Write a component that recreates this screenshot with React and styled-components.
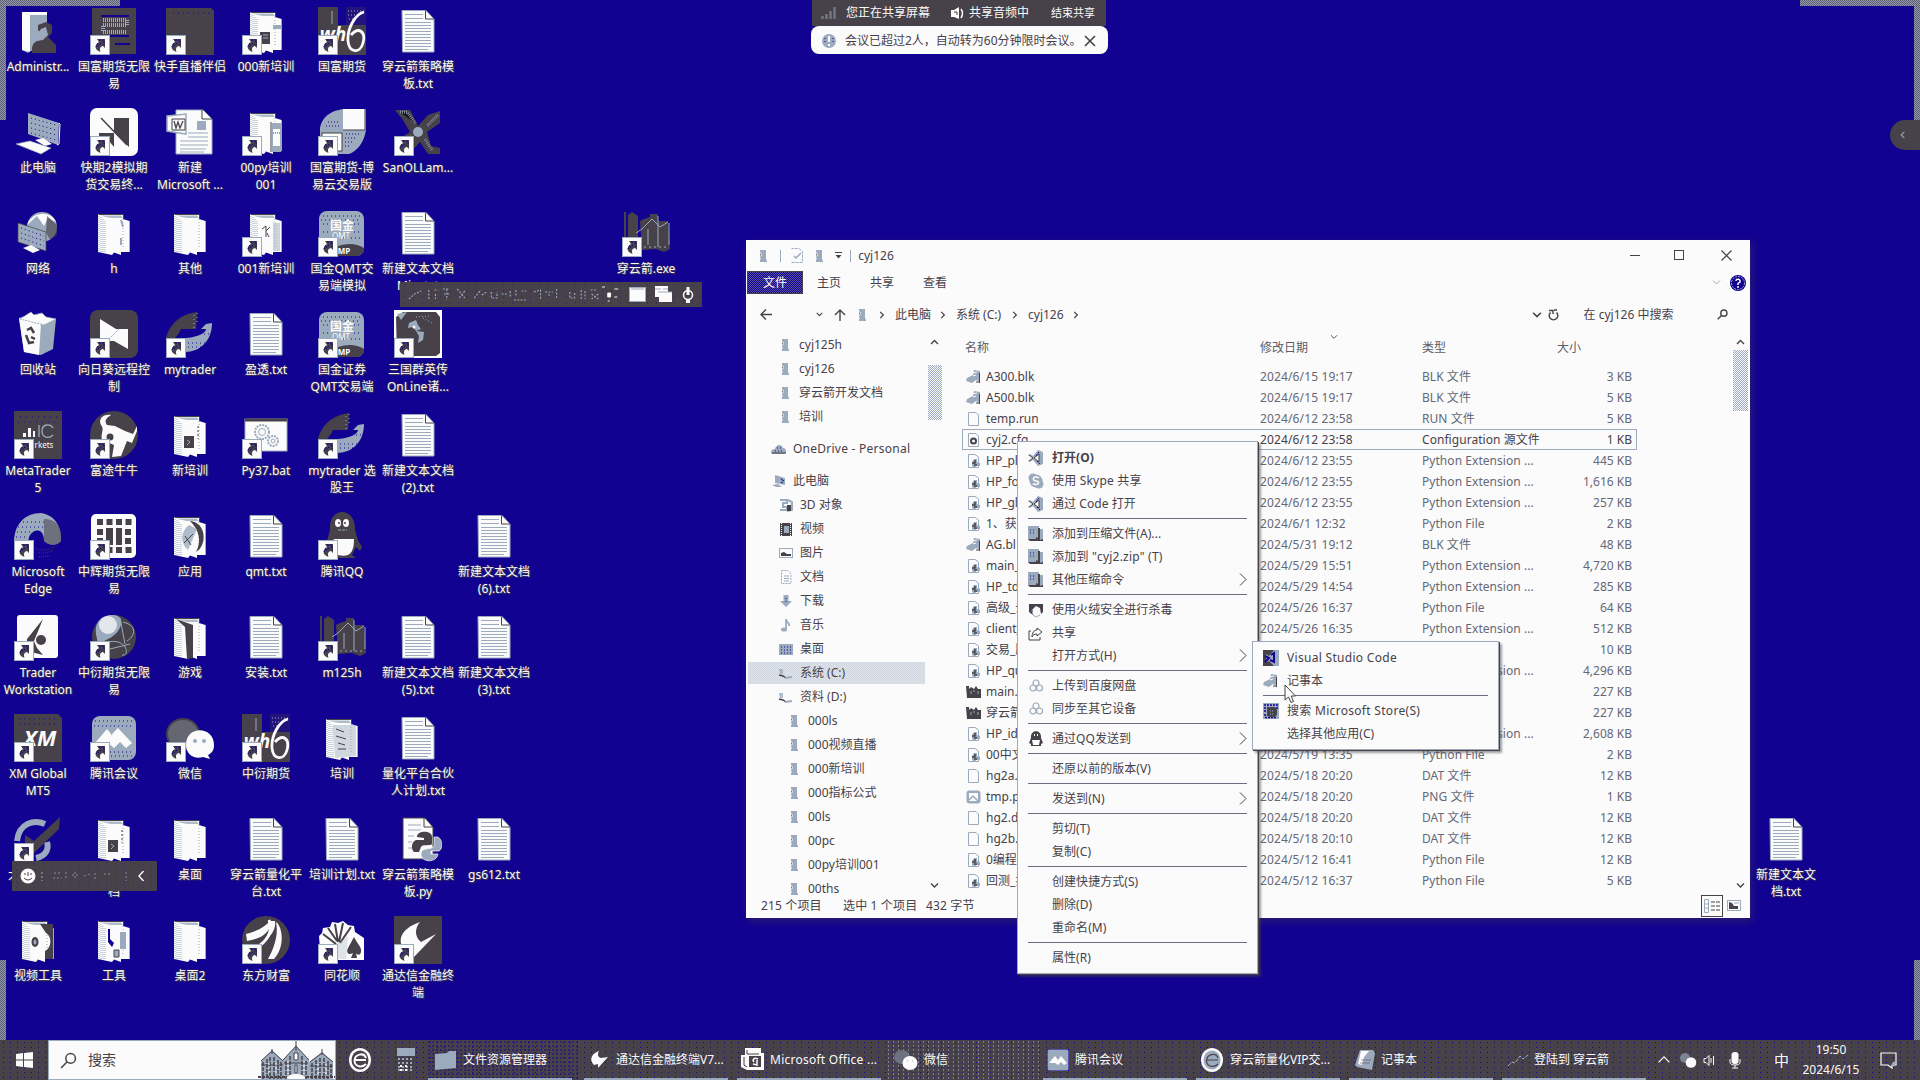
import React from "react";
import styled, { createGlobalStyle, css } from "styled-components";

const N = "#120291";
const D = "#474149";
const G = "#9babbd";
const W = "#fbfbfb";

const dither = (a, b) => css`
  background: repeating-conic-gradient(${a} 0 25%, ${b} 0 50%) 0 0 / 2px 2px;
`;

const Global = createGlobalStyle`
  *{box-sizing:border-box}
  html,body{margin:0;background:${N};overflow:hidden}
  body{font:12px/16px "Noto Sans","Noto Sans CJK SC",sans-serif;color:${D};white-space:nowrap}
  svg{display:block;flex:none}
`;

const Screen = styled.div`
  position: relative;
  width: 1920px;
  height: 1080px;
  overflow: hidden;
  display: flex;
  flex-direction: column;
`;
const Desktop = styled.main`
  height: 1040px;
  display: grid;
  grid-template-columns: repeat(25, 76px);
  grid-template-rows: repeat(10, 101px);
`;
const Cell = styled.div`
  grid-column: ${(p) => p.$c};
  grid-row: ${(p) => p.$r};
  padding-top: 7px;
  display: flex;
  flex-direction: column;
  align-items: center;
`;
const Pic = styled.div`
  position: relative;
  width: 48px;
  height: 48px;
  margin-bottom: 3px;
  flex: none;
`;
const Badge = styled.div`
  position: absolute;
  left: 0;
  bottom: 0;
  width: 20px;
  height: 20px;
  background: ${W};
  border: 1px solid ${G};
`;
const Label = styled.div`
  color: ${W};
  line-height: 17px;
  text-align: center;
  text-shadow: 1px 1px 1px ${D}, 0 0 2px ${D};
`;
const LabelLine = styled.div``;

/* ---------- desktop icons ---------- */
const Doc = () => (
  <svg width="48" height="48" viewBox="0 0 48 48">
    <path d="M8 3.5H32L40 12V45H8.500Z" fill={W} stroke={G} />
    <path d="M31.500 3.500V12H40" fill="none" stroke={D} />
    <path d="M11 7.500H29M11 11.500H29M11 15.500H37M11 18.500H37M11 21.500H37M11 24.500H37M11 27.500H37M11 30.500H37M11 33.500H37M11 36.500H37M11 39.500H37M11 42.500H34" stroke={G} />
  </svg>
);
const Folder = ({ v = "" }) => (
  <svg width="48" height="48" viewBox="0 0 48 48">
    <path d="M8 5H33V10L39.500 12V43H31V46L24 43.500L22 46L8 43Z" fill={W} />
    <path d="M8.500 5.500H33.500V10" fill="none" stroke={D} />
    <path d="M10 6.500H31L33 9H21L16 8Z" fill={G} opacity=".8" />
    <path d="M9 7V42M11 8V43M13 10V43M15 12V44" stroke={G} strokeDasharray="1 1" />
    <path d="M33 10V40" stroke={G} strokeDasharray="1 2" />
    <path d="M39.500 12V43" stroke={G} />
    {v === "dark" && <path d="M10 6L27 12V45L21 46L19 14Z" fill={D} />}
    {v === "sq" && (
      <>
        <rect x="18" y="25" width="10" height="12" fill={D} />
        <path d="M21 29L24 31L21 34" stroke={G} fill="none" />
        <path d="M32 15V28" stroke={D} strokeDasharray="2 2" />
      </>
    )}
    {v === "kb" && (
      <>
        <rect x="18" y="25" width="10" height="12" fill={D} />
        <path d="M31 18H39V22H31Z" fill={G} />
        <path d="M21 28H26M21 31H26" stroke={G} />
      </>
    )}
    {v === "dev" && (
      <>
        <path d="M30 15H39V44H30Z" fill={G} />
        <path d="M31 21H38V38H31Z" fill={W} />
        <path d="M31 25H38" stroke={D} strokeDasharray="1 1" />
        <path d="M29 14V44" stroke={D} />
      </>
    )}
    {v === "r" && (
      <>
        <path d="M20 20L24 17V28M24 22L28 18M25 24L27 28" stroke={D} fill="none" />
        <path d="M31 14H38V42H31Z" fill={G} opacity=".5" />
      </>
    )}
    {v === "app" && (
      <>
        <path d="M24 9C40 10 42 33 30 40C36 29 33 18 24 9Z" fill={D} />
        <path d="M23 13C14 20 14 31 22 38L31 17Z" fill={G} opacity=".8" />
        <path d="M18 31L27 22M19 24L25 33" stroke={D} />
      </>
    )}
    {v === "vid" && (
      <>
        <path d="M26 8H39V43H31V35C38 32 38 20 32 17Z" fill={D} />
        <ellipse cx="21" cy="26" rx="3.500" ry="5" fill={D} />
        <ellipse cx="21" cy="26" rx="1.500" ry="2.500" fill={G} />
      </>
    )}
    {v === "tool" && (
      <>
        <path d="M18 13V26L22 31L24 27L20 23V13Z" fill={N} />
        <rect x="30" y="16" width="6" height="17" fill={G} />
        <path d="M24 34H29V41H24Z" fill={G} stroke={D} />
      </>
    )}
    {v === "lines" && (
      <>
        <path d="M15 11H38V42L17 44Z" fill={G} opacity=".45" />
        <path d="M18 15L26 18M18 22L28 25M20 29L27 31M20 35H28" stroke={D} />
      </>
    )}
    {v === "line" && <path d="M31 11L33 18M31 29V36" stroke={G} strokeWidth="2" />}
  </svg>
);
const S = ({ children }) => (
  <svg width="48" height="48" viewBox="0 0 48 48">
    {children}
  </svg>
);
const T = ({ x, y, s, f = W, b, i, children }) => (
  <text x={x} y={y} fontSize={s} fill={f} fontWeight={b ? 700 : 400} fontStyle={i ? "italic" : "normal"} fontFamily={`"Noto Sans", "Noto Sans CJK SC", sans-serif`} textAnchor="middle">
    {children}
  </text>
);
const Swoosh = () => (
  <S>
    <path d="M0 27C5 11 17 4 31 2L30 19H15C12 25 10 29 0 34Z" fill={D} />
    <path d="M20 28C34 27 40 22 40 19L35 19L40 14L46 13C46 31 34 42 19 42Z" fill={G} />
    <path d="M22 33H40M22 37H36M38 24H44" stroke={N} strokeDasharray="1 3" />
    <path d="M28 5V18M31 3V13" stroke={G} strokeDasharray="1 3" />
  </S>
);
const Wh6 = () => (
  <S>
    <path d="M0 0H20V18H28V0H48V48H0Z" fill={D} />
    <path d="M28 0H48V18H28Z" fill={N} opacity=".7" />
    <path d="M30 4H46M30 8H42M31 12H40" stroke={G} strokeDasharray="1 2" />
    <path d="M14 4V17" stroke={G} />
    <T x={15} y={34} s={19} b i>wh</T>
    <path d="M46 5C37 7 29 22 30 34C31 46 42 47 45 36C48 25 41 19 33 28" fill="none" stroke={W} strokeWidth="2.800" />
  </S>
);
const Qmt = () => (
  <S>
    <rect x="1" y="2" width="45" height="45" rx="8" fill={G} />
    <path d="M5 7H43M3 11H43M5 15H12M36 15H43M5 23H12M36 23H43M5 29H43" stroke={N} strokeDasharray="1 3" />
    <path d="M20 37Q35 32 46 39V43L40 47H20Z" fill={D} />
    <T x={24} y={21} s={12} b>国金</T>
    <T x={23} y={30} s={8}>QMT</T>
    <T x={26} y={45} s={8} b>MP</T>
  </S>
);
const Pillars = () => (
  <S>
    <path d="M2 3H4V30H2ZM6 6L10 3L16 7V30H6ZM18 12L22 10L28 8V5H36V12H46L48 40L42 43L34 40L20 41Z" fill={D} />
    <path d="M14 24L20 20L30 10L38 18L46 13M26 20V36M36 7V38M47 14V36" fill="none" stroke={G} />
    <path d="M22 38H46" stroke={G} strokeDasharray="2 3" />
  </S>
);
const icons = {
  doc: <Doc />,
  fo: <Folder />,
  user: (
    <S>
      <path d="M8 5H33V44H16L14 46L8 43Z" fill={G} />
      <path d="M8 5L16 8V45L8 43Z" fill={W} />
      <path d="M8 5H33V8H16Z" fill={W} />
      <path d="M24 18L32 15L38 18V26L34 30L38 34L42 38V46H18C17 37 21 34 26 33L28 28L24 23Z" fill={D} />
      <path d="M27 22L32 20L34 28L29 33L22 34L24 26Z" fill={G} />
    </S>
  ),
  pc: (
    <S>
      <path d="M14 5L45 15L44 37L14 26Z" fill={G} />
      <path d="M17 10L42 17M17 15L42 22M17 20L42 27M17 25L42 32" stroke={N} strokeDasharray="1 3" />
      <path d="M45 15L46 16L45 36L43 37" stroke={W} fill="none" />
      <path d="M21 32L29 30L38 36L31 38Z" fill={W} />
      <path d="M2 36L16 33L37 40L27 46Z" fill={W} stroke={G} strokeDasharray="2 1" />
    </S>
  ),
  net: (
    <S>
      <circle cx="28" cy="18" r="15" fill={G} />
      <path d="M13 16C18 2 37 1 42 13L34 9L30 17L23 7Z" fill={W} />
      <path d="M33 7L43 16V26L36 31L32 23Z" fill={D} opacity=".65" />
      <path d="M4 14L32 23V42L4 33Z" fill={G} stroke={D} strokeWidth=".7" />
      <path d="M7 19L30 27M7 24L30 32M7 29L30 37" stroke={N} strokeDasharray="1 3" />
      <path d="M9 39L17 36L26 41L19 44Z" fill={W} />
    </S>
  ),
  bin: (
    <S>
      <path d="M5 8L18 4L42 9L39 39L27 45L10 42Z" fill={G} />
      <path d="M5 8L27 13L25 45L10 42Z" fill={W} />
      <path d="M6 9L17 2L20 5L28 3L32 7L42 9L30 15Z" fill={W} stroke={G} strokeDasharray="2 1" />
      <path d="M13 20L17 18L20 23M12 25L15 33L20 32M17 27L21 29" fill="none" stroke={D} strokeWidth="2.500" />
    </S>
  ),
  mt: (
    <S>
      <rect width="48" height="48" fill={D} />
      <path d="M9 22H12V26H9ZM14 17H17V26H14ZM19 20H21V26H19Z" fill={W} />
      <path d="M25 14V26M39 17C36 12 28 13 28 20C28 27 35 28 39 24" fill="none" stroke={G} strokeWidth="1.300" />
      <T x={30} y={37} s={8} f={W}>rkets</T>
      <path d="M6 6H45M4 11H44" stroke={N} strokeDasharray="1 5" />
    </S>
  ),
  edge: (
    <S>
      <path d="M0 31C0 12 11 1 27 1C41 3 48 15 47 29C42 35 34 33 30 29C30 21 26 16 19 20C12 25 14 33 20 41C12 43 4 38 0 31Z" fill={G} />
      <path d="M30 7C44 7 48 17 47 29C42 35 34 33 30 29Z" fill={D} opacity=".55" />
      <path d="M21 36Q32 41 41 34M23 40Q32 43 39 38M25 45L36 44" stroke={D} strokeDasharray="1 1" fill="none" />
      <path d="M5 10H31M4 15H30M3 20H18M2 25H14" stroke={N} strokeDasharray="1 3" />
    </S>
  ),
  trader: (
    <S>
      <rect x="3" y="2" width="41" height="43" rx="3" fill={W} />
      <path d="M29 6L13 26V38L29 42L23 35L20 28Z" fill={D} />
      <circle cx="27" cy="27" r="5" fill={D} />
    </S>
  ),
  xm: (
    <S>
      <path d="M0 0H44L48 4V48H0Z" fill={D} />
      <T x={26} y={32} s={22} b i>XM</T>
      <path d="M5 5H44M5 10H44" stroke={N} strokeDasharray="1 4" />
    </S>
  ),
  dzh: (
    <S>
      <path d="M3 26C5 8 20 4 31 9M22 43C32 41 35 34 33 27" fill="none" stroke={G} strokeWidth="6" />
      <path d="M11 20L20 26L46 2L45 14L20 38L11 29Z" fill={D} />
    </S>
  ),
  gf: (
    <S>
      <rect x="2" y="1" width="44" height="46" fill={D} />
      <path d="M11 9H39M11 29H39M25 37H40" stroke={N} strokeWidth="2" />
      <path d="M13 13H37V18H13V25H37" stroke={G} strokeWidth="4" strokeDasharray="1 1" fill="none" />
    </S>
  ),
  ks: (
    <S>
      <path d="M0 1H45L48 4V48H0Z" fill={D} />
      <path d="M7 6H46" stroke={N} strokeDasharray="1 4" />
    </S>
  ),
  kq: (
    <S>
      <rect width="48" height="48" rx="7" fill={W} />
      <path d="M24 10H39V39L24 24Z" fill={D} />
      <path d="M11 10L37 37" stroke={D} strokeWidth="1.500" />
      <path d="M9 25H24V39L19 33V29H9Z" fill={D} />
    </S>
  ),
  sun: (
    <S>
      <rect width="48" height="48" rx="8" fill={D} />
      <path d="M10 9L26 19H38V39L24 31H10Z" fill={W} />
      <path d="M19 29L29 19" stroke={G} strokeDasharray="2 1" />
    </S>
  ),
  bull: (
    <S>
      <circle cx="24" cy="24" r="24" fill={D} />
      <path d="M21 4C13 3 8 8 11 14C15 18 10 23 12 29L24 34L22 46L31 45L37 30L42 32L47 20V15L43 23L35 20L25 15L17 14C14 10 16 7 21 4Z" fill={W} />
      <circle cx="20" cy="26" r="3.500" fill={D} />
    </S>
  ),
  zh: (
    <S>
      <rect x="1" y="2" width="45" height="44" rx="5" fill={W} />
      <path d="M7 10H42M7 20H14M35 20H42M7 29H14M35 29H42M7 38H42" stroke={D} strokeWidth="6" strokeDasharray="6 3.500" />
      <path d="M16 16H23V33H16ZM26 16H32V33H26Z" fill={D} />
    </S>
  ),
  globe: (
    <S>
      <circle cx="24" cy="24" r="22" fill={D} />
      <path d="M6 21C4 7 14 1 24 2C37 4 31 19 20 25L8 31Z" fill={G} />
      <circle cx="18" cy="12" r="9" fill={W} opacity=".75" />
      <path d="M33 9C49 13 44 24 37 28M18 29C38 25 40 44 32 42M30 5L35 31M20 36L40 31" fill="none" stroke={G} />
    </S>
  ),
  tm: (
    <S>
      <rect x="2" y="2" width="44" height="44" rx="8" fill={G} />
      <path d="M5 7H43M4 12H44M4 38H44M5 42H43" stroke={N} strokeDasharray="1 3" />
      <path d="M5 29L17 15L21 20V29ZM18 25L24 18L28 14L42 29L36 34L30 28L24 34L18 29Z" fill={W} />
    </S>
  ),
  word: (
    <S>
      <path d="M10 2H37L46 11V46H10Z" fill={W} stroke={G} />
      <path d="M36 2V11H46" fill="none" stroke={D} />
      <path d="M1 8L20 6V26L1 23Z" fill={W} stroke={G} strokeWidth="1.500" />
      <path d="M6 11H19V22H6Z" fill="none" stroke={D} />
      <path d="M8 13L10 20L12 14L14 20L17 13" fill="none" stroke={D} strokeWidth="1.300" />
      <path d="M31 13H40V22H31Z" fill={G} />
      <path d="M22 25H42M22 29H42M14 33H42M14 37H42M14 41H40M14 44H38" stroke={G} />
    </S>
  ),
  swoosh: <Swoosh />,
  chat: (
    <S>
      <ellipse cx="17" cy="20" rx="17" ry="16" fill={D} />
      <ellipse cx="17" cy="20" rx="15" ry="14" fill={G} opacity=".35" />
      <path d="M20 31C20 11 48 12 48 31C48 36 46 39 42 41L44 45L37 43C28 46 20 40 20 31Z" fill={W} />
      <circle cx="29" cy="27" r="2" fill={G} />
      <circle cx="38" cy="27" r="2" fill={G} />
    </S>
  ),
  wh: <Wh6 />,
  east: (
    <S>
      <ellipse cx="24" cy="24" rx="24" ry="24" fill={D} />
      <path d="M4 18C16 15 24 10 28 5C30 16 19 23 5 25ZM29 5H33C35 18 21 27 11 33C24 25 28 19 29 5ZM34 6C41 11 43 31 32 43H26C31 34 37 20 34 6Z" fill={W} />
      <path d="M27 4C32 16 24 26 14 32" stroke={W} strokeWidth="3" fill="none" />
    </S>
  ),
  gfb: (
    <S>
      <path d="M2 40V20C4 7 17 1 28 1H48V22C46 35 39 43 31 46H18Z" fill={G} />
      <path d="M25 1H47V22H25Z" fill={W} />
      <path d="M47 1V22H25" fill="none" stroke={D} />
      <path d="M28 26H42M27 30H39M27 34H36M27 38H33M8 18H22M10 14H22" stroke={N} strokeDasharray="1 2" />
      <rect x="4" y="25" width="20" height="18" fill={W} stroke={D} />
    </S>
  ),
  san: (
    <S>
      <path d="M1 2L16 2L24 18L34 7L46 3V15L33 24L37 38L46 40V46H34L26 34L15 46H3L2 33L16 24L9 12Z" fill={D} />
      <path d="M6 4L13 4L22 16M44 7L33 18M38 42L31 31M6 35L18 28" stroke={G} strokeWidth="3" strokeDasharray="1 1" opacity=".7" />
      <circle cx="24" cy="24" r="5" fill={G} />
    </S>
  ),
  qmt: <Qmt />,
  hero: (
    <S>
      <rect width="48" height="48" fill={W} />
      <path d="M9 2H42L46 7V43L42 46H3L2 7Z" fill={D} />
      <path d="M3 4L13 2L7 10ZM15 13L22 10L24 15L27 19L22 21L19 17L14 18ZM22 21L30 22L29 30L24 33L25 26Z" fill={G} />
      <circle cx="20" cy="17" r="1.500" fill={W} />
      <path d="M22 7L36 6M29 8L38 13" stroke={G} strokeDasharray="1 2" />
    </S>
  ),
  bat: (
    <S>
      <rect x="3" y="8" width="42" height="32" fill={W} stroke={G} />
      <path d="M3 9H45" stroke={D} strokeWidth="3" />
      <circle cx="20" cy="21" r="7" fill="none" stroke={G} strokeWidth="2" strokeDasharray="2 1" />
      <circle cx="20" cy="21" r="3.500" fill="none" stroke={G} />
      <circle cx="31" cy="30" r="5" fill="none" stroke={G} strokeWidth="2" strokeDasharray="2 1" />
      <circle cx="31" cy="30" r="2" fill="none" stroke={G} />
    </S>
  ),
  qq: (
    <S>
      <path d="M12 18C10-6 38-6 37 18L40 28L44 35L42 39L38 35L34 43L38 46H20L12 40L7 36Z" fill={D} />
      <path d="M16 27H36C36 40 32 46 20 43L12 38Z" fill={W} />
      <ellipse cx="20" cy="11" rx="3" ry="4" fill={W} />
      <ellipse cx="28" cy="11" rx="3" ry="4" fill={W} />
      <circle cx="21" cy="11" r="1" fill={D} />
      <circle cx="27" cy="11" r="1" fill={D} />
      <path d="M20 18H29" stroke={G} strokeDasharray="3 1" />
    </S>
  ),
  pillars: <Pillars />,
  fan: (
    <S>
      <path d="M1 20L4 17L5 12L12 11L14 6L20 7L25 5L30 9L36 10L37 16L43 20L46 22V44H11L2 34Z" fill={W} />
      <path d="M5 18L18 28M10 12L19 25M17 8L20 26M25 7L21 26M33 11L22 27" stroke={D} strokeWidth="2" />
      <path d="M18 28L30 20L28 43H19Z" fill={G} opacity=".3" />
      <path d="M36 21C40 29 44 31 43 36C42 40 39 39 38 37L39 42H33L35 37C30 40 28 36 30 32Z" fill={D} />
    </S>
  ),
  py: (
    <S>
      <path d="M9 3H31L39 12V44H9Z" fill={W} stroke={D} />
      <path d="M30 3V12H39" fill="none" stroke={D} />
      <path d="M14 10H27M14 15H27M14 21H20M14 27H18M14 33H18" stroke={G} />
      <path d="M23 22C23 15 38 15 38 22V29C38 31 28 29 27 32L25 37H20C17 34 17 27 22 25H30V23Z" fill={D} />
      <path d="M40 22H44C49 25 49 34 45 36H37V39H44C43 48 27 48 27 39C27 31 40 36 40 30Z" fill={G} stroke={W} strokeWidth=".7" />
    </S>
  ),
  tdx: (
    <S>
      <rect width="48" height="48" fill={D} />
      <path d="M26 6C21 12 20 20 27 26L42 18L20 41V34L13 36C2 27 5 13 26 6Z" fill={W} />
    </S>
  ),
};
const F = (v) => <Folder v={v} />;

// [column, row, icon, shortcut?, label lines]
const desk = [
  [1, 1, icons.user, 0, "Administr..."],
  [1, 2, icons.pc, 0, "此电脑"],
  [1, 3, icons.net, 0, "网络"],
  [1, 4, icons.bin, 0, "回收站"],
  [1, 5, icons.mt, 1, "MetaTrader|5"],
  [1, 6, icons.edge, 1, "Microsoft|Edge"],
  [1, 7, icons.trader, 1, "Trader|Workstation"],
  [1, 8, icons.xm, 1, "XM Global|MT5"],
  [1, 9, icons.dzh, 1, "大智慧新版"],
  [1, 10, F("vid"), 0, "视频工具"],
  [2, 1, icons.gf, 1, "国富期货无限|易"],
  [2, 2, icons.kq, 1, "快期2模拟期|货交易终..."],
  [2, 3, F("line"), 0, "h"],
  [2, 4, icons.sun, 1, "向日葵远程控|制"],
  [2, 5, icons.bull, 1, "富途牛牛"],
  [2, 6, icons.zh, 1, "中辉期货无限|易"],
  [2, 7, icons.globe, 1, "中衍期货无限|易"],
  [2, 8, icons.tm, 1, "腾讯会议"],
  [2, 9, F("sq"), 0, "开发文|档"],
  [2, 10, F("tool"), 0, "工具"],
  [3, 1, icons.ks, 1, "快手直播伴侣"],
  [3, 2, icons.word, 0, "新建|Microsoft ..."],
  [3, 3, icons.fo, 0, "其他"],
  [3, 4, icons.swoosh, 1, "mytrader"],
  [3, 5, F("sq"), 0, "新培训"],
  [3, 6, F("app"), 0, "应用"],
  [3, 7, F("dark"), 0, "游戏"],
  [3, 8, icons.chat, 1, "微信"],
  [3, 9, icons.fo, 0, "桌面"],
  [3, 10, icons.fo, 0, "桌面2"],
  [4, 1, F("kb"), 1, "000新培训"],
  [4, 2, F("dev"), 1, "00py培训|001"],
  [4, 3, F("r"), 1, "001新培训"],
  [4, 4, icons.doc, 0, "盈透.txt"],
  [4, 5, icons.bat, 1, "Py37.bat"],
  [4, 6, icons.doc, 0, "qmt.txt"],
  [4, 7, icons.doc, 0, "安装.txt"],
  [4, 8, icons.wh, 1, "中衍期货"],
  [4, 9, icons.doc, 0, "穿云箭量化平|台.txt"],
  [4, 10, icons.east, 1, "东方财富"],
  [5, 1, icons.wh, 1, "国富期货"],
  [5, 2, icons.gfb, 1, "国富期货-博|易云交易版"],
  [5, 3, icons.qmt, 1, "国金QMT交|易端模拟"],
  [5, 4, icons.qmt, 1, "国金证券|QMT交易端"],
  [5, 5, icons.swoosh, 1, "mytrader 选|股王"],
  [5, 6, icons.qq, 1, "腾讯QQ"],
  [5, 7, icons.pillars, 1, "m125h"],
  [5, 8, F("lines"), 0, "培训"],
  [5, 9, icons.doc, 0, "培训计划.txt"],
  [5, 10, icons.fan, 1, "同花顺"],
  [6, 1, icons.doc, 0, "穿云箭策略模|板.txt"],
  [6, 2, icons.san, 1, "SanOLLam..."],
  [6, 3, icons.doc, 0, "新建文本文档|Mi....txt"],
  [6, 4, icons.hero, 1, "三国群英传|OnLine诸..."],
  [6, 5, icons.doc, 0, "新建文本文档|(2).txt"],
  [6, 7, icons.doc, 0, "新建文本文档|(5).txt"],
  [6, 8, icons.doc, 0, "量化平台合伙|人计划.txt"],
  [6, 9, icons.py, 0, "穿云箭策略模|板.py"],
  [6, 10, icons.tdx, 1, "通达信金融终|端"],
  [7, 6, icons.doc, 0, "新建文本文档|(6).txt"],
  [7, 7, icons.doc, 0, "新建文本文档|(3).txt"],
  [7, 9, icons.doc, 0, "gs612.txt"],
  [9, 3, icons.pillars, 1, "穿云箭.exe"],
  [24, 9, icons.doc, 0, "新建文本文|档.txt"],
];
const Shortcut = () => (
  <Badge>
    <svg width="18" height="18" viewBox="0 0 18 18">
      <path d="M6 3H14V12L12 10C9 10.500 8.500 13 9.500 16C3.500 14 3 9 8 6Z" fill={D} />
      <path d="M8 4H13V9M7 7L5 11M10 7L7 10" stroke={N} fill="none" strokeDasharray="2 1" />
    </svg>
  </Badge>
);

/* ---------- share frame and floating bars ---------- */
const Edge = styled.div`
  position: absolute;
  ${(p) => p.$at}
  ${dither("#8f9aae", "#5f5b70")}
`;
const ShareTop = styled.div`
  position: absolute;
  left: 811px;
  top: 0;
  width: 297px;
`;
const ShareBar = styled.div`
  margin: 0 2px 0 1px;
  height: 26px;
  background: ${D};
  color: ${W};
  display: flex;
  align-items: center;
  padding-left: 9px;
`;
const ShareText = styled.span`
  width: ${(p) => p.$w}px;
  font-size: ${(p) => p.$s || 12}px;
  margin-left: ${(p) => p.$m}px;
`;
const Banner = styled.div`
  height: 28px;
  border-radius: 8px;
  background: ${W};
  display: flex;
  align-items: center;
  padding: 2px 12px 0 11px;
`;
const BannerText = styled.span`
  width: 239px;
  margin-left: 9px;
`;
const SideTab = styled.div`
  position: absolute;
  right: 0;
  top: 120px;
  width: 30px;
  height: 30px;
  border-radius: 15px 0 0 15px;
  background: ${D};
  display: flex;
  align-items: center;
  justify-content: center;
  padding-right: 4px;
`;
const FloatBar = styled.div`
  position: absolute;
  left: ${(p) => p.$x}px;
  top: ${(p) => p.$y}px;
  width: ${(p) => p.$w}px;
  height: ${(p) => p.$h}px;
  background: radial-gradient(${N} 0.6px, transparent 0.8px) 0 0 / 9px 6px, ${D};
  display: flex;
  align-items: center;
  justify-content: space-between;
  padding: 0 ${(p) => p.$pr}px 0 8px;
`;

/* ---------- explorer ---------- */
const Win = styled.section`
  position: absolute;
  left: 746px;
  top: 240px;
  width: 1004px;
  height: 678px;
  background: ${W};
  display: flex;
  flex-direction: column;
  box-shadow: 2px 3px 8px rgba(71, 65, 73, 0.45);
`;
const TitleBar = styled.header`
  height: 31px;
  display: flex;
  align-items: center;
  padding-left: 10px;
`;
const Slot = styled.span`
  width: ${(p) => p.$w}px;
  margin-left: ${(p) => p.$m || 0}px;
  flex: none;
  display: flex;
  align-items: center;
  justify-content: center;
`;
const VLine = styled.i`
  width: 1px;
  height: 12px;
  background: ${G};
`;
const Grow = styled.span`
  flex: 1;
`;
const Tabs = styled.nav`
  height: 23px;
  display: flex;
  align-items: center;
  padding-left: 1px;
`;
const FileTab = styled.div`
  width: 56px;
  height: 23px;
  color: ${W};
  text-align: center;
  border: 1px solid ${D};
  line-height: 22px;
  ${dither(N, "#57509a")}
`;
const Tab = styled.div`
  width: 53px;
  text-align: center;
  padding: 1px 1px 0 0;
`;
const Address = styled.div`
  height: 39px;
  padding-top: 2px;
  display: flex;
  align-items: center;
  padding-left: 10px;
`;
const Crumb = styled.span`
  width: ${(p) => p.$w}px;
  margin-left: 7px;
`;
const Body = styled.div`
  height: 563px;
  display: flex;
  overflow: hidden;
`;
const Tree = styled.div`
  width: 179px;
  flex: none;
`;
const TreeRow = styled.div`
  height: 24px;
  margin-top: ${(p) => (p.$gap ? 8 : 0)}px;
  padding-left: ${(p) => p.$in}px;
  display: flex;
  align-items: center;
  gap: 6px;
`;
const TreeSel = styled(TreeRow)`
  height: 22px;
  margin: 1px 0 1px 2px;
  padding-left: ${(p) => p.$in - 2}px;
  ${dither("#dfe4ea", "#cfd6df")}
`;
const Latin = styled.span`
  letter-spacing: 0.25px;
`;
const Scroll = styled.div`
  width: ${(p) => p.$w}px;
  flex: none;
  display: flex;
  flex-direction: column;
  align-items: center;
  padding: 5px 0 6px;
`;
const Thumb = styled.div`
  width: ${(p) => p.$w}px;
  height: ${(p) => p.$h}px;
  margin: ${(p) => p.$m}px 0 auto;
  ${dither(W, G)}
`;
const List = styled.div`
  width: 772px;
  padding-left: 18px;
  flex: none;
`;
const ListHead = styled.div`
  display: grid;
  grid-template-columns: 295px 162px 135px 1fr;
  padding-left: 3px;
  height: 28px;
  line-height: 29px;
  margin-bottom: 5px;
  color: #5c5d69;
`;
const SortHead = styled.span`
  display: flex;
  gap: 22px;
`;
const FileRow = styled.div`
  display: grid;
  grid-template-columns: 298px 162px 122px 1fr;
  width: 675px;
  height: 21px;
  line-height: 22px;
  padding-right: 5px;
  color: ${(p) => (p.$sel ? D : "#656877")};
  box-shadow: ${(p) => (p.$sel ? `inset 0 0 0 1px ${G}` : "none")};
`;
const FileName = styled.span`
  display: flex;
  align-items: center;
  gap: 4px;
  padding-left: 4px;
  color: ${D};
`;
const CellText = styled.span`
  letter-spacing: ${(p) => p.$ls}px;
`;
const Size = styled.span`
  text-align: right;
`;
const Status = styled.footer`
  height: 22px;
  padding: 0 9px 3px 15px;
  display: flex;
  align-items: center;
`;
const StatusText = styled.span`
  width: ${(p) => p.$w}px;
  letter-spacing: 0.15px;
`;
const ViewBox = styled.span`
  width: 22px;
  height: 22px;
  border: 1px solid ${D};
  display: flex;
  align-items: center;
  justify-content: center;
  margin: 1px 4px 0 0;
`;

/* ---------- menus ---------- */
const Menu = styled.div`
  position: absolute;
  left: ${(p) => p.$x}px;
  top: ${(p) => p.$y}px;
  width: ${(p) => p.$w}px;
  padding: 4px 0;
  background: ${W};
  border: 1px solid ${G};
  box-shadow: 1px 1px 0 ${D}, 3px 3px 2px rgba(71, 65, 73, 0.5);
`;
const Item = styled.div`
  height: 23px;
  padding: 0 10px;
  display: flex;
  align-items: center;
  font-weight: ${(p) => (p.$b ? 700 : 400)};
`;
const ItemText = styled.span`
  letter-spacing: ${(p) => p.$ls}px;
`;
const ItemIcon = styled.span`
  width: 24px;
  height: 16px;
`;
const Sep = styled.div`
  height: 7px;
  margin: 0 10px;
  display: flex;
  align-items: center;
  &::before {
    content: "";
    flex: 1;
    height: 1px;
    background: #6a6f7e;
  }
`;
const Cursor = styled.div`
  position: absolute;
  left: 1284px;
  top: 684px;
`;

/* ---------- taskbar ---------- */
const Taskbar = styled.footer`
  height: 40px;
  background: radial-gradient(${N} 0.6px, transparent 0.8px) 0 0 / 7px 5px, ${D};
  color: ${W};
  display: flex;
  align-items: center;
`;
const SearchBox = styled.div`
  width: 288px;
  height: 40px;
  background: ${W};
  border: 1px solid ${G};
  color: ${D};
  font-size: 14px;
  display: flex;
  align-items: center;
  padding-left: 11px;
  gap: 11px;
`;
const Task = styled.div`
  width: 153px;
  height: 40px;
  display: flex;
  align-items: center;
  padding-left: ${(p) => p.$p || 8}px;
  gap: 6px;
  position: relative;
  ${(p) => p.$open === "nav" && `background:radial-gradient(${N} .6px,transparent .8px) 0 0/4px 4px;`}
  ${(p) => p.$open === "chat" && `background:radial-gradient(rgba(155,171,189,.7) .6px,transparent .8px) 0 0/5px 4px;`}
  &::after {
    content: "";
    position: absolute;
    bottom: 0;
    left: ${(p) => p.$u || 4}px;
    width: 144px;
    height: 2px;
    background: ${(p) => (p.$open === "chat" ? "transparent" : G)};
  }
`;
const Ime = styled.span`
  width: 42px;
  padding-left: 10px;
  font-size: 15px;
  line-height: 22px;
`;
const Clock = styled.div`
  width: 72px;
  text-align: center;
  line-height: 20px;
`;
const ClockLine = styled.div``;

/* ---------- small glyphs ---------- */
const Chev = ({ d = "r", w = 8, c = D, t = 1.4 }) => {
  const p = { r: "M2.500 1L6 4.500L2.500 8", d: "M1 2.500L4.500 6L8 2.500", u: "M1 6L4.500 2.500L8 6", l: "M6 1L2.500 4.500L6 8" }[d];
  return (
    <svg width={w} height={w} viewBox="0 0 9 9">
      <path d={p} fill="none" stroke={c} strokeWidth={t} />
    </svg>
  );
};
const MiniFolder = () => (
  <svg width="14" height="14" viewBox="0 0 14 14">
    <path d="M3 1H9V10L10 12V13H3Z" fill={G} />
    <path d="M3 4H4V7H3M3 10H4" stroke={W} />
  </svg>
);
const M = ({ children }) => (
  <svg width="16" height="16" viewBox="0 0 16 16">
    {children}
  </svg>
);
const mini = {
  blk: (
    <M>
      <path d="M8 1L14 2V13L10 11L6 14L0 12L1 9L7 6Z" fill={G} />
      <path d="M13.500 4V14M10 13H13" stroke={D} />
      <path d="M6 4L11 3M7 7L10 6" stroke={W} />
    </M>
  ),
  blank: (
    <M>
      <path d="M2.500 1.500H10L12.500 4V14.500H2.500Z" fill={W} stroke={G} />
    </M>
  ),
  cfg: (
    <M>
      <path d="M2.500 1.500H10L12.500 4V14.500H2.500Z" fill={W} stroke={G} />
      <circle cx="7.500" cy="9" r="2.500" fill="none" stroke={D} strokeWidth="2" />
    </M>
  ),
  py: (
    <M>
      <path d="M2.500 1.500H9L12.500 4V14.500H2.500Z" fill={W} stroke={G} />
      <path d="M6 9L8 6H11V9L14 10V13H10L9 15L6 13Z" fill={G} />
      <path d="M6 10H9V7M8 12H11" stroke={D} fill="none" strokeWidth="1.500" />
    </M>
  ),
  exe: (
    <M>
      <path d="M0 2H3V5L5 3L8 5L10 2L12 5H15V14H1Z" fill={D} />
      <path d="M5 7V10M8 6V8M12 7V10" stroke={G} />
    </M>
  ),
  png: (
    <M>
      <rect x="0.500" y="1.500" width="14" height="13" rx="3" fill={G} />
      <path d="M3 4H12V12H3Z" fill={W} />
      <path d="M3 11L7 7L12 12" stroke={G} fill="none" strokeWidth="1.500" />
    </M>
  ),
  cloud: (
    <M>
      <path d="M0 12C0 8 3 8 4 8C5 3 11 3 12 7C16 7 16 13 13 13H1Z" fill={G} />
      <path d="M1 12H15" stroke={D} />
      <path d="M4 10H13M6 7H11" stroke={N} strokeDasharray="1 2" />
    </M>
  ),
  pc: (
    <M>
      <path d="M4 2L14 5V12L4 10Z" fill={G} />
      <path d="M1 12L7 11L11 14H5Z" fill={G} />
      <path d="M10 6L13 8M10 9L12 10" stroke={N} />
    </M>
  ),
  cube: (
    <M>
      <path d="M2 3H9V6H5V10H9V13H2M10 3L14 5V13L9 14" fill="none" stroke={G} strokeWidth="2" />
      <path d="M9 8H13V14H9Z" fill={D} />
    </M>
  ),
  video: (
    <M>
      <rect x="2" y="2" width="12" height="13" fill={D} />
      <path d="M3.500 2V15M12.500 2V15" stroke={W} strokeDasharray="1 1" />
      <rect x="6" y="5" width="5" height="7" fill={G} />
    </M>
  ),
  pic: (
    <M>
      <rect x="1.500" y="3.500" width="13" height="9" fill={W} stroke={G} />
      <path d="M3 8L6 7L9 9H13V11H3Z" fill={D} />
    </M>
  ),
  docs: (
    <M>
      <path d="M3.500 1.500H10L13 5V14.500H3.500Z" fill={W} stroke={G} strokeDasharray="2 1" />
      <path d="M6 7H11M6 9.500H11M6 12H11" stroke={G} />
    </M>
  ),
  down: (
    <M>
      <path d="M5.500 2H10.500V8H14L8 14L2 8H5.500Z" fill={G} />
      <path d="M8 5V11" stroke={N} strokeDasharray="1 2" />
    </M>
  ),
  music: (
    <M>
      <path d="M8 2V12M8 2C8 6 12 5 11 9" stroke={G} strokeWidth="1.800" fill="none" />
      <ellipse cx="6" cy="12.500" rx="3" ry="2" fill={G} />
    </M>
  ),
  desk: (
    <M>
      <rect x="1" y="3" width="14" height="11" fill={G} />
      <path d="M3 6H13M3 9H13M3 12H13" stroke={N} strokeDasharray="1 2" />
    </M>
  ),
  drive: (
    <M>
      <path d="M1 4H5V9H2Z" fill={G} opacity=".8" />
      <path d="M1 10L5 11L8 13" stroke={D} strokeWidth="1.500" fill="none" />
      <path d="M7 13L14 12" stroke={G} strokeWidth="2" />
    </M>
  ),
  vs: (
    <M>
      <path d="M10 0L15 2V14L10 16L5 10L2 12L0 11L4 8L0 5L2 4L5 6Z" fill={G} />
      <path d="M11 4V12L6 8ZM1 5L5 8L1 11" fill={W} stroke={D} />
      <path d="M11 2L8 6M9 11L12 14" stroke={N} strokeDasharray="2 1" />
    </M>
  ),
  vsdark: (
    <M>
      <rect width="16" height="16" fill={D} />
      <path d="M11 0H16V16H11L6 11L3 12V4L6 6Z" fill={G} />
      <path d="M2 6L6 8L2 12M8 5L11 3V12L7 10" stroke={N} fill="none" strokeWidth="2" />
    </M>
  ),
  skype: (
    <M>
      <circle cx="5" cy="5" r="4.500" fill={G} />
      <circle cx="11" cy="11" r="4.500" fill={G} />
      <circle cx="8" cy="8" r="6.500" fill={G} />
      <path d="M11 5C8 3 5 4 5.500 6.500C6 9 11 7 10.500 10C10 12 6 12 5 10.500" stroke={W} fill="none" strokeWidth="1.500" />
    </M>
  ),
  zip: (
    <M>
      <path d="M0 0H11V3H15V15H2L0 13Z" fill={G} />
      <path d="M0 13H8V11L10 12V2H12V14L15 13V15H2Z" fill={D} />
      <path d="M2 4H7M2 7H7" stroke={N} strokeDasharray="1 2" />
    </M>
  ),
  fire: (
    <M>
      <path d="M1 2H15V10L13 12L12 6L8 4L5 7V13L1 10Z" fill={D} />
      <path d="M8 4L4 8L5 13L8 15L12 13" fill="none" stroke={G} />
    </M>
  ),
  share: (
    <M>
      <path d="M3 6H1V15H12V12" fill="none" stroke={D} />
      <path d="M9 3L14 7L9 11V9C6 9 5 10 4 12C4 8 6 5 9 5Z" fill="none" stroke={D} />
    </M>
  ),
  baidu: (
    <M>
      <circle cx="8" cy="5" r="3" fill="none" stroke={G} strokeWidth="1.200" />
      <circle cx="5" cy="10" r="3" fill="none" stroke={G} strokeWidth="1.200" />
      <circle cx="11.500" cy="10" r="3" fill="none" stroke={G} strokeWidth="1.200" />
    </M>
  ),
  qq: (
    <M>
      <path d="M3 7C2-2 14-2 13 7L15 12L13 13V15H3V13L1 12Z" fill={D} />
      <path d="M4 9H12L11 14H5Z" fill={W} />
      <path d="M6 4H7M9 4H10" stroke={W} strokeWidth="2" />
    </M>
  ),
  store: (
    <M>
      <rect width="16" height="16" fill={G} />
      <path d="M1 2H15M1 5H15M1 8H4M1 12H5M2 14.500H14" stroke={N} strokeWidth="1.500" strokeDasharray="2 1" />
      <rect x="4" y="4" width="10" height="10" rx="4" fill={D} />
      <path d="M7 8H11M7 11H11" stroke={G} strokeDasharray="1 1" />
    </M>
  ),
};

const tree = [
  [33, "f", "cyj125h"],
  [33, "f", "cyj126"],
  [33, "f", "穿云箭开发文档"],
  [33, "f", "培训"],
  [25, "cloud", "OneDrive - Personal", 1],
  [25, "pc", "此电脑", 1],
  [32, "cube", "3D 对象"],
  [32, "video", "视频"],
  [32, "pic", "图片"],
  [32, "docs", "文档"],
  [32, "down", "下载"],
  [32, "music", "音乐"],
  [32, "desk", "桌面"],
  [32, "drive", "系统 (C:)", 0, 1],
  [32, "drive", "资料 (D:)"],
  [42, "f", "000ls"],
  [42, "f", "000视频直播"],
  [42, "f", "000新培训"],
  [42, "f", "000指标公式"],
  [42, "f", "00ls"],
  [42, "f", "00pc"],
  [42, "f", "00py培训001"],
  [42, "f", "00ths"],
];
const PE = "Python Extension ...";
const PF = "Python File";
const files = [
  ["blk", "A300.blk", "2024/6/15 19:17", "BLK 文件", "3"],
  ["blk", "A500.blk", "2024/6/15 19:17", "BLK 文件", "5"],
  ["blank", "temp.run", "2024/6/12 23:58", "RUN 文件", "5"],
  ["cfg", "cyj2.cfg", "2024/6/12 23:58", "Configuration 源文件", "1"],
  ["py", "HP_pl", "2024/6/12 23:55", PE, "445"],
  ["py", "HP_fo", "2024/6/12 23:55", PE, "1,616"],
  ["py", "HP_gl", "2024/6/12 23:55", PE, "257"],
  ["py", "1、获", "2024/6/1 12:32", PF, "2"],
  ["blk", "AG.bl", "2024/5/31 19:12", "BLK 文件", "48"],
  ["py", "main_", "2024/5/29 15:51", PE, "4,720"],
  ["py", "HP_td", "2024/5/29 14:54", PE, "285"],
  ["py", "高级_云", "2024/5/26 16:37", PF, "64"],
  ["py", "client_", "2024/5/26 16:35", PE, "512"],
  ["py", "交易_股", "", "", "10"],
  ["py", "HP_qu", "", PE, "4,296"],
  ["exe", "main.", "", "", "227"],
  ["exe", "穿云箭", "", "", "227"],
  ["py", "HP_id", "", PE, "2,608"],
  ["py", "00中文", "2024/5/19 13:35", PF, "2"],
  ["blank", "hg2a.", "2024/5/18 20:20", "DAT 文件", "12"],
  ["png", "tmp.p", "2024/5/18 20:20", "PNG 文件", "1"],
  ["blank", "hg2.d", "2024/5/18 20:20", "DAT 文件", "12"],
  ["blank", "hg2b.", "2024/5/18 20:10", "DAT 文件", "12"],
  ["py", "0编程", "2024/5/12 16:41", PF, "12"],
  ["py", "回测_扌", "2024/5/12 16:37", PF, "5"],
];
const menu = [
  ["vs", "打开(O)", 0, 1],
  ["skype", "使用 Skype 共享"],
  ["vs", "通过 Code 打开"],
  null,
  ["zip", "添加到压缩文件(A)..."],
  ["zip", '添加到 "cyj2.zip" (T)'],
  ["zip", "其他压缩命令", 1],
  null,
  ["fire", "使用火绒安全进行杀毒"],
  ["share", "共享"],
  ["", "打开方式(H)", 1],
  null,
  ["baidu", "上传到百度网盘"],
  ["baidu", "同步至其它设备"],
  null,
  ["qq", "通过QQ发送到", 1],
  null,
  ["", "还原以前的版本(V)"],
  null,
  ["", "发送到(N)", 1],
  null,
  ["", "剪切(T)"],
  ["", "复制(C)"],
  null,
  ["", "创建快捷方式(S)"],
  ["", "删除(D)"],
  ["", "重命名(M)"],
  null,
  ["", "属性(R)"],
];
const submenu = [["vsdark", "Visual Studio Code"], ["blk", "记事本"], null, ["store", "搜索 Microsoft Store(S)"], ["", "选择其他应用(C)"]];

const tracking = (s) => {
  const latin = (s.match(/[a-z]/gi) || []).length;
  return latin > 12 ? 0.3 : latin > 4 ? 0.2 : 0.05;
};

const MenuItems = ({ items }) =>
  items.map((it, i) =>
    it ? (
      <Item key={i} $b={it[3]}>
        <ItemIcon>{mini[it[0]]}</ItemIcon>
        <ItemText $ls={tracking(it[1])}>{it[1]}</ItemText>
        {it[2] ? (
          <>
            <Grow />
            <svg width="8" height="13" viewBox="0 0 8 13">
              <path d="M1 0.500L7 6.500L1 12.500" fill="none" stroke={D} />
            </svg>
          </>
        ) : null}
      </Item>
    ) : (
      <Sep key={i} />
    )
  );

const Castle = () => (
  <svg width="77" height="38" viewBox="0 0 77 38">
    <path d="M3 20L14 9L25 20V38H3ZM25 19L38 5L51 19V38H25ZM51 21L64 11L75 21V38H51Z" fill={G} />
    <path d="M14 8V13M38 0V10M64 8V14M3 20L14 10L25 20M25 19L38 5L51 19M52 21L64 12L75 21M3 24H25M26 22H50M52 25H75" stroke={D} fill="none" />
    <path d="M5 21V38M9 18V38M12 16V38M16 16V38M20 19V38M23 21V38M28 20V38M32 15V38M44 15V38M48 20V38M54 22V38M58 19V38M62 17V38M66 17V38M70 20V38M73 23V38" stroke={D} strokeWidth="1.500" strokeDasharray="4 1" />
    <path d="M36 12H40V19H36ZM37 24H39V32H37Z" fill={W} stroke={D} />
    <path d="M11 22V34M18 22V34M60 23V34M68 23V34M30 20V33M46 20V33" stroke={W} strokeDasharray="2 2" />
    <ellipse cx="38" cy="37" rx="9" ry="4" fill={W} />
    <path d="M0 36H28M48 36H77" stroke={D} strokeWidth="2" strokeDasharray="3 1" />
  </svg>
);
const Magnifier = ({ w = 16 }) => (
  <svg width={w} height={w} viewBox="0 0 16 16">
    <circle cx="10" cy="6" r="4.500" fill="none" stroke={D} strokeWidth={w < 14 ? 2 : 1.400} />
    <path d="M7 9L1 15" stroke={D} strokeWidth={w < 14 ? 2 : 1.400} />
  </svg>
);
const Mic = ({ ring }) => (
  <svg width="14" height="18" viewBox="0 0 14 18">
    {ring ? (
      <>
        <circle cx="7" cy="9" r="4.500" fill="none" stroke={W} strokeWidth="1.500" />
        <path d="M5.500 1H8.500V9H5.500ZM5 14H9V17H5Z" fill={W} />
      </>
    ) : (
      <>
        <rect x="3.500" y="1" width="7" height="12" rx="3" fill={W} />
        <path d="M2 8V11Q2 14 7 14Q12 14 12 11V8M7 14V17M4 17H10" fill="none" stroke={W} />
      </>
    )}
  </svg>
);
const Ring = ({ t }) => (
  <svg width="24" height="26" viewBox="0 0 24 26">
    <ellipse cx="12" cy="13" rx="11" ry="12" fill={W} />
    <ellipse cx="12" cy="13" rx="8.500" ry="9.500" fill={t} />
    <path d="M6 13H18M18 17C14 21 7 20 6.500 14C6.500 7 16 5 18 11" fill="none" stroke={t === D ? W : D} strokeWidth={t === D ? 2 : 1.200} />
  </svg>
);

export default function App() {
  return (
    <Screen>
      <Global />
      <Desktop>
        {desk.map(([c, r, ic, sc, l]) => (
          <Cell key={c + "-" + r} $c={c} $r={r}>
            <Pic>
              {ic}
              {sc ? <Shortcut /> : null}
            </Pic>
            <Label>
              {l.split("|").map((s) => (
                <LabelLine key={s}>{s}</LabelLine>
              ))}
            </Label>
          </Cell>
        ))}
      </Desktop>

      <Edge $at="left:0;top:0;width:120px;height:6px;" />
      <Edge $at="left:0;top:6px;width:6px;height:114px;" />
      <Edge $at="right:0;top:0;width:120px;height:6px;" />
      <Edge $at="right:0;top:6px;width:6px;height:114px;" />
      <Edge $at="left:0;top:960px;width:6px;height:80px;" />
      <Edge $at="right:0;top:960px;width:6px;height:80px;" />

      <ShareTop>
        <ShareBar>
          <svg width="15" height="14" viewBox="0 0 15 14">
            <path d="M1.500 10V13M5.500 8V13M9.500 5V13M13.500 1V13" stroke={G} strokeWidth="2.500" opacity=".5" />
          </svg>
          <ShareText $w={84} $m={10}>您正在共享屏幕</ShareText>
          <Slot $w={16} $m={19}>
            <svg width="15" height="13" viewBox="0 0 15 13">
              <path d="M1 3H4L9 0V12L4 10H1Z" fill={W} />
              <path d="M4 5H7V8" stroke={D} fill="none" />
              <path d="M11 2Q14 6 11 11" fill="none" stroke={W} strokeWidth="1.500" />
            </svg>
          </Slot>
          <ShareText $w={60} $m={4}>共享音频中</ShareText>
          <ShareText $w={50} $m={22} $s={11}>结束共享</ShareText>
        </ShareBar>
        <Banner>
          <svg width="14" height="14" viewBox="0 0 14 14">
            <circle cx="7" cy="7" r="7" fill={G} />
            <path d="M7 2V8M7 10V12" stroke={W} strokeWidth="2" />
            <path d="M3 4V10M11 4V10" stroke={N} strokeDasharray="1 2" />
          </svg>
          <BannerText>会议已超过2人，自动转为60分钟限时会议。</BannerText>
          <svg width="12" height="12" viewBox="0 0 12 12">
            <path d="M1 1L11 11M11 1L1 11" stroke={D} strokeWidth="1.600" />
          </svg>
        </Banner>
      </ShareTop>
      <SideTab>
        <Chev d="l" w={8} c={G} t={1.2} />
      </SideTab>

      <FloatBar $x={400} $y={282} $w={302} $h={25} $pr={7}>
        <svg width="213" height="17" viewBox="0 0 225 17" preserveAspectRatio="none">
          <path d="M1 13L7 8L14 5M22 4V13M28 4H32M29 8V13M37 3H44M38 8H45M41 3V14M52 3L60 12M60 5L53 13M70 12L77 4M78 9L83 6M88 6V12H94V6M99 8H106M108 5V12M114 4V11M120 5H125M112 14H125M133 6L140 4V13M145 6H153M148 9H150M157 3V13M171 6V12H176V6M183 4V14M187 5V13M193 4H199M194 8L201 13M201 8L194 13" fill="none" stroke={G} strokeWidth="1.200" strokeDasharray="2 1.500" />
          <path d="M205 1H208M218 3H222M211 7H214V11H211ZM218 11H221M211 15H213" fill={W} stroke={W} />
        </svg>
        <svg width="17" height="15" viewBox="0 0 17 15">
          <rect x="0.500" y="0.500" width="16" height="14" fill={W} stroke={G} />
          <path d="M2 2H15" stroke={G} />
        </svg>
        <svg width="18" height="17" viewBox="0 0 18 17">
          <path d="M0 0H13V11H0ZM4 6H17V16H4Z" fill={W} />
          <path d="M3 6H17M8 3H13M0 3H6" stroke={G} />
        </svg>
        <Mic ring />
      </FloatBar>
      <FloatBar $x={12} $y={861} $w={145} $h={30} $pr={12}>
        <svg width="110" height="18" viewBox="0 0 110 18">
          <circle cx="8" cy="9" r="7.500" fill={W} />
          <path d="M5 6V8M11 6V8M4 11Q8 15 12 11M8 5V9" stroke={D} fill="none" />
          <path d="M22 5V14" stroke={G} strokeDasharray="2 2" />
          <path d="M34 6H41M33 11H42M46 5V12M52 8H60M55 5V13M64 9L71 7M75 6V12M84 7H92M106 5V14" stroke={G} strokeDasharray="2 2" opacity=".7" />
        </svg>
        <svg width="8" height="12" viewBox="0 0 8 12">
          <path d="M6.500 1L2 6L6.500 11" fill="none" stroke={W} strokeWidth="1.400" />
        </svg>
      </FloatBar>

      <Win>
        <TitleBar>
          <Slot $w={16}><MiniFolder /></Slot>
          <Slot $w={16}><VLine /></Slot>
          <Slot $w={18}>
            <svg width="12" height="15" viewBox="0 0 12 15">
              <path d="M0.500 14.500H11.500V3.500L8 0.500H0.500" fill="none" stroke={G} strokeDasharray="3 1" />
              <path d="M3 8L5 10L10 5" fill="none" stroke={G} strokeWidth="1.500" />
            </svg>
          </Slot>
          <Slot $w={27}><MiniFolder /></Slot>
          <Slot $w={11}>
            <svg width="7" height="7" viewBox="0 0 7 7">
              <path d="M0 .5H7" stroke={D} />
              <path d="M0.500 3H6.500L3.500 6.500Z" fill={D} />
            </svg>
          </Slot>
          <Slot $w={12}><VLine /></Slot>
          <Slot $w={40}>cyj126</Slot>
          <Grow />
          <Slot $w={45}>
            <svg width="10" height="2"><path d="M0 .5H10" stroke={D} /></svg>
          </Slot>
          <Slot $w={45}>
            <svg width="11" height="11"><rect x=".5" y=".5" width="9" height="9" fill="none" stroke={D} /></svg>
          </Slot>
          <Slot $w={48}>
            <svg width="11" height="11" viewBox="0 0 11 11"><path d="M.5 .5L10.500 10.500M10.500 .5L.5 10.500" stroke={D} strokeWidth="1.200" /></svg>
          </Slot>
        </TitleBar>
        <Tabs>
          <FileTab>文件</FileTab>
          <Tab>主页</Tab>
          <Tab>共享</Tab>
          <Tab>查看</Tab>
          <Grow />
          <Slot $w={10}><Chev d="d" w={9} c={G} t={1} /></Slot>
          <Slot $w={16} $m={9}>
            <svg width="16" height="16" viewBox="0 0 16 16">
              <circle cx="8" cy="8" r="8" fill={N} />
              <circle cx="8" cy="8" r="6.500" fill="none" stroke={G} strokeWidth="1" strokeDasharray="2 1" />
              <path d="M6 6C6 3 11 4 10 7L8 8.500V10M8 11V13" fill="none" stroke={W} strokeWidth="1.500" />
            </svg>
          </Slot>
          <Slot $w={4} />
        </Tabs>
        <Address>
          <Slot $w={20}>
            <svg width="12" height="11" viewBox="0 0 12 11"><path d="M6 .5L1 5.500L6 10.500M1 5.500H12" fill="none" stroke={D} strokeWidth="1.400" /></svg>
          </Slot>
          <Slot $w={16} $m={35}><Chev d="d" w={7} /></Slot>
          <Slot $w={20} $m={3}>
            <svg width="12" height="12" viewBox="0 0 12 12"><path d="M1 6L6 1L11 6M6 1V12" fill="none" stroke={D} strokeWidth="1.400" /></svg>
          </Slot>
          <Slot $w={16} $m={5}><MiniFolder /></Slot>
          <Slot $w={12} $m={5}><Chev /></Slot>
          <Crumb $w={42}>此电脑</Crumb>
          <Slot $w={12}><Chev /></Slot>
          <Crumb $w={53}>系统 (C:)</Crumb>
          <Slot $w={12}><Chev /></Slot>
          <Crumb $w={42}>cyj126</Crumb>
          <Slot $w={12}><Chev /></Slot>
          <Grow />
          <Slot $w={12}><Chev d="d" w={10} /></Slot>
          <Slot $w={16} $m={2}>
            <svg width="11" height="12" viewBox="0 0 11 12"><path d="M2.500 3.500A4.300 4.300 0 1 0 8.500 3.500M1 1.500H5V5M6 1H9" fill="none" stroke={D} strokeWidth="1.400" /></svg>
          </Slot>
          <Slot $w={93} $m={21}>在 cyj126 中搜索</Slot>
          <Slot $w={12} $m={41}><Magnifier w={11} /></Slot>
          <Slot $w={22} />
        </Address>
        <Body>
          <Tree>
            {tree.map(([x, ic, t, gap, sel]) => {
              const R = sel ? TreeSel : TreeRow;
              return (
                <R key={t} $in={x} $gap={gap}>
                  {ic === "f" ? <MiniFolder /> : mini[ic]}
                  {t.length > 12 ? <Latin>{t}</Latin> : t}
                </R>
              );
            })}
          </Tree>
          <Scroll $w={19}>
            <Chev d="u" w={9} />
            <Thumb $w={14} $h={55} $m={18} />
            <Chev d="d" w={9} />
          </Scroll>
          <List>
            <ListHead>
              <span>名称</span>
              <SortHead>
                修改日期
                <Chev d="d" w={8} t={1} />
              </SortHead>
              <span>类型</span>
              <span>大小</span>
            </ListHead>
            {files.map((f, i) => (
              <FileRow key={i} $sel={i === 3}>
                <FileName>
                  {mini[f[0]]}
                  {f[1]}
                </FileName>
                <CellText $ls={0.13}>{f[2]}</CellText>
                <CellText $ls={0.05}>{f[3]}</CellText>
                <Size>{f[4]} KB</Size>
              </FileRow>
            ))}
          </List>
          <Grow />
          <Scroll $w={20}>
            <Chev d="u" w={9} />
            <Thumb $w={15} $h={61} $m={3} />
            <Chev d="d" w={9} />
          </Scroll>
        </Body>
        <Status>
          <StatusText $w={82}>215 个项目</StatusText>
          <StatusText $w={83}>选中 1 个项目</StatusText>
          <StatusText $w={60}>432 字节</StatusText>
          <Grow />
          <ViewBox>
            <svg width="16" height="14" viewBox="0 0 16 14">
              <path d="M.5 .5H4.500V13.500H.5ZM.5 5H4.500M.5 9H4.500" fill="none" stroke={G} />
              <path d="M7 3H16M7 7H16M7 11H16" stroke={D} strokeDasharray="4 1" />
            </svg>
          </ViewBox>
          <svg width="14" height="11" viewBox="0 0 14 11">
            <rect x=".5" y=".5" width="13" height="10" fill={W} stroke={G} />
            <path d="M2 2L5 3L7 6L11 6V9H2Z" fill={D} />
            <path d="M7 3H12" stroke={G} />
          </svg>
        </Status>
      </Win>

      <Menu $x={1017} $y={441} $w={241}>
        <MenuItems items={menu} />
      </Menu>
      <Menu $x={1252} $y={641} $w={247}>
        <MenuItems items={submenu} />
      </Menu>
      <Cursor>
        <svg width="13" height="20" viewBox="0 0 13 20">
          <path d="M1 1V16L4.500 13L7 18.500L9.500 17.500L7.200 12H11.500Z" fill={W} stroke={D} />
        </svg>
      </Cursor>

      <Taskbar>
        <Slot $w={48}>
          <svg width="17" height="16" viewBox="0 0 17 16">
            <path d="M0 2L7 1V7.500H0ZM8 1L17 0V7.500H8ZM0 8.500H7V15L0 14ZM8 8.500H17V16L8 15Z" fill={W} />
          </svg>
        </Slot>
        <SearchBox>
          <Magnifier w={17} />
          搜索
          <Grow />
          <Castle />
        </SearchBox>
        <Slot $w={48}><Ring t={D} /></Slot>
        <Slot $w={43}>
          <svg width="18" height="24" viewBox="0 0 18 24">
            <rect width="18" height="8" fill={G} />
            <path d="M1 11H17M1 15H17M1 19H17M1 22H17" stroke={G} strokeWidth="2" strokeDasharray="2 2" />
            <path d="M3 17H5V19H3ZM3 21H5V23H3ZM8 17H10V19H8ZM8 21H10V23H8Z" fill={W} />
          </svg>
        </Slot>
        <Task $open="nav" $u={1}>
          <svg width="22" height="20" viewBox="0 0 22 20"><path d="M0 4L12 3L14 1H21V18L0 20Z" fill={G} /></svg>
          文件资源管理器
        </Task>
        <Task $p={10}>
          <svg width="20" height="20" viewBox="0 0 20 20"><path d="M9 1C7 5 8 7 11 8L18 7L8 18V14L4 15C-1 10 1 4 9 1Z" fill={W} /></svg>
          通达信金融终端V7...
        </Task>
        <Task>
          <svg width="23" height="24" viewBox="0 0 23 24">
            <path d="M4 0H20V5H23V22H6L0 19V7H4Z" fill={W} />
            <path d="M8 8H20V19H8Z" fill={D} />
            <path d="M17 11C13 9 11 12 13 14M16 12V17L12 16" fill="none" stroke={W} strokeWidth="1.500" />
            <path d="M3 9V17L6 19M6 2V6H18" stroke={D} fill="none" />
          </svg>
          <Latin>Microsoft Office ...</Latin>
        </Task>
        <Task $open="chat">
          <svg width="24" height="22" viewBox="0 0 24 22">
            <ellipse cx="8" cy="8" rx="8" ry="7" fill="#6e7280" />
            <ellipse cx="16" cy="14" rx="7.500" ry="7" fill={W} />
            <path d="M13 12H14M18 12H19" stroke={G} />
          </svg>
          微信
        </Task>
        <Task>
          <svg width="22" height="22" viewBox="0 0 22 22">
            <rect width="22" height="22" rx="2" fill={G} stroke={N} />
            <path d="M2 14L8 7L11 11L14 7L20 14L17 16L14 13L11 16L8 14Z" fill={W} />
          </svg>
          腾讯会议
        </Task>
        <Task><Ring t={G} />穿云箭量化VIP交...</Task>
        <Task $p={10}>
          <svg width="20" height="22" viewBox="0 0 20 22">
            <path d="M5 1H18L20 4L17 21L2 18L0 16Z" fill={G} />
            <path d="M6 2H14L9 8L7 16L3 15Z" fill={W} />
            <path d="M6 11H16M5 14H15" stroke={D} opacity=".5" />
          </svg>
          记事本
        </Task>
        <Task $p={10}>
          <svg width="20" height="16" viewBox="0 0 20 16"><path d="M0 14L4 10L7 11L12 4L15 7L20 3" fill="none" stroke={G} strokeDasharray="4 1" /></svg>
          登陆到 穿云箭
        </Task>
        <Slot $w={22} $m={2}><Chev d="u" w={14} c={W} t={0.8} /></Slot>
        <Slot $w={26}>
          <svg width="17" height="15" viewBox="0 0 17 15">
            <circle cx="5" cy="5" r="5" fill="#7d8392" />
            <circle cx="11" cy="9.500" r="5.300" fill={W} />
          </svg>
        </Slot>
        <Slot $w={16}>
          <svg width="12" height="13" viewBox="0 0 12 13"><path d="M1 4.500H3L6 1.500V11.500L3 8.500H1ZM8 4V9M10.500 2V11" fill="none" stroke={W} /></svg>
        </Slot>
        <Slot $w={36}><Mic /></Slot>
        <Slot $w={11} />
        <Ime>中</Ime>
        <Slot $w={1} $m={-12} />
        <Clock>
          <ClockLine>19:50</ClockLine>
          <ClockLine>2024/6/15</ClockLine>
        </Clock>
        <Slot $w={42}>
          <svg width="17" height="17" viewBox="0 0 17 17"><path d="M1 1H16V13H12V16L8 13H1Z" fill="none" stroke={W} strokeWidth="1.200" /><path d="M12 11L15 9V14L12 15" fill={G} /></svg>
        </Slot>
      </Taskbar>
    </Screen>
  );
}
